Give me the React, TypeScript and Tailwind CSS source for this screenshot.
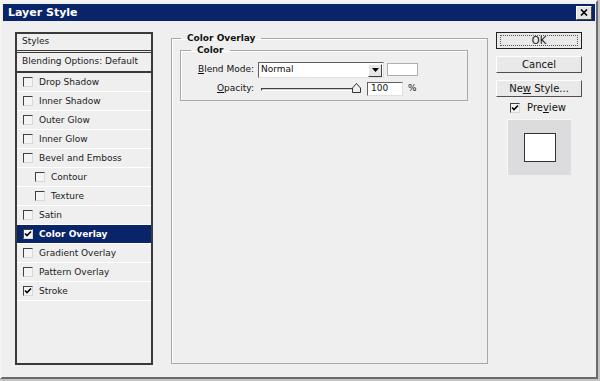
import { ReactNode } from "react";

const font = { fontFamily: '"DejaVu Sans", Verdana, sans-serif' };

const Check = ({ checked = false }: { checked?: boolean }) => (
    <span className="w-[10px] h-[10px] shrink-0 bg-[#f4f4f4] border-t border-l border-[#404040] border-r border-b border-r-[#d8d8d8] border-b-[#d8d8d8] flex items-center justify-center">
        {checked && (
            <svg width="8" height="8" viewBox="0 0 8 8">
                <path d="M1 3.5 L3 5.5 L7 1.5" stroke="#000" strokeWidth="1.6" fill="none" />
            </svg>
        )}
    </span>
);

interface RowProps {
    label: string;
    checked?: boolean;
    indent?: boolean;
    selected?: boolean;
}

const Row = ({ label, checked, indent, selected }: RowProps) => (
    <div
        className={`h-[19px] flex items-center gap-[6px] border-b border-white ${indent ? "pl-[18px]" : "pl-[6px]"} ${selected ? "bg-[#0a246a] text-white font-bold" : "text-[#1a1a1a]"}`}
    >
        <Check checked={checked} />
        <span className="text-[9px] leading-none">{label}</span>
    </div>
);

const Button = ({ children, focused = false }: { children: ReactNode; focused?: boolean }) => (
    <div
        className={`w-[86px] h-[17px] flex items-center justify-center bg-[#e9e9e9] text-[10px] text-[#111] border ${focused ? "border-[#202020]" : "border-t-white border-l-white border-r-[#505050] border-b-[#505050]"}`}
    >
        {focused ? (
            <span className="w-[78px] h-[11px] border border-dotted border-[#555] flex items-center justify-center leading-none">{children}</span>
        ) : (
            <span className="leading-none">{children}</span>
        )}
    </div>
);

const rows: RowProps[] = [
    { label: "Drop Shadow" },
    { label: "Inner Shadow" },
    { label: "Outer Glow" },
    { label: "Inner Glow" },
    { label: "Bevel and Emboss" },
    { label: "Contour", indent: true },
    { label: "Texture", indent: true },
    { label: "Satin" },
    { label: "Color Overlay", checked: true, selected: true },
    { label: "Gradient Overlay" },
    { label: "Pattern Overlay" },
    { label: "Stroke", checked: true },
];

export default function App() {
    return (
        <div className="w-[600px] h-[381px] bg-[#c4c4c4] overflow-hidden" style={font}>
            <div className="w-[598px] h-[379px] bg-[#efefef] border-t-2 border-l-2 border-t-[#f4f4f4] border-l-[#f4f4f4] border-r-2 border-b-2 border-r-[#6a6a6a] border-b-[#6a6a6a] flex flex-col">
                <div className="mx-[1px] mt-[2px] h-[17px] bg-[#0a246a] flex items-center justify-between pl-[5px] pr-[3px]">
                    <span className="text-white font-bold text-[11px] leading-none">Layer Style</span>
                    <div className="w-[16px] h-[14px] bg-[#e4e4e4] border border-t-white border-l-white border-r-[#404040] border-b-[#404040] flex items-center justify-center">
                        <svg width="8" height="7" viewBox="0 0 8 7">
                            <path d="M1 0.5 L7 6.5 M7 0.5 L1 6.5" stroke="#000" strokeWidth="1.6" />
                        </svg>
                    </div>
                </div>

                <div className="flex pl-[13px] pt-[11px]">
                    <div className="w-[138px] h-[333px] border-2 border-[#3a3a3a] bg-[#efefef] flex flex-col">
                        <div className="h-[19px] flex items-center pl-[5px] border-b-[3px] border-double border-[#3a3a3a] text-[9px] text-[#1a1a1a]">Styles</div>
                        <div className="h-[20px] flex items-center pl-[5px] border-b-2 border-[#3a3a3a] text-[9px] text-[#1a1a1a]">Blending Options: Default</div>
                        {rows.map((r) => (
                            <Row key={r.label} {...r} />
                        ))}
                    </div>

                    <fieldset className="ml-[18px] mt-[2px] w-[317px] h-[330px] border border-[#a8a8a8] shadow-[inset_1px_1px_0_#fff] px-[8px]">
                        <legend className="ml-[1px] px-[6px] text-[9px] font-bold text-[#111] leading-none">Color Overlay</legend>
                        <fieldset className="mt-[3px] w-[288px] h-[55px] border border-[#a8a8a8] shadow-[inset_1px_1px_0_#fff]">
                            <legend className="ml-[10px] px-[6px] text-[9px] font-bold text-[#111] leading-none">Color</legend>
                            <div className="flex items-center mt-[7px] pl-[14px]">
                                <span className="w-[63px] text-right text-[9px] text-[#111] pr-[4px]"><u>B</u>lend Mode:</span>
                                <div className="w-[126px] h-[16px] bg-white border border-t-[#606060] border-l-[#606060] border-r-[#e0e0e0] border-b-[#e0e0e0] flex items-center justify-between">
                                    <span className="pl-[2px] text-[9px] text-[#111]">Normal</span>
                                    <div className="w-[14px] h-[13px] mr-[1px] bg-[#e6e6e6] border border-t-white border-l-white border-r-[#404040] border-b-[#404040] flex items-center justify-center">
                                        <svg width="7" height="4" viewBox="0 0 7 4">
                                            <path d="M0 0 H7 L3.5 4 Z" fill="#000" />
                                        </svg>
                                    </div>
                                </div>
                                <div className="ml-[3px] mb-[2px] w-[31px] h-[13px] bg-white border border-[#b0b0b0]" />
                            </div>
                            <div className="flex items-center mt-[4px] pl-[14px]">
                                <span className="w-[63px] text-right text-[9px] text-[#111] pr-[4px]"><u>O</u>pacity:</span>
                                <div className="w-[100px] h-[8px] relative flex items-center ml-[3px]">
                                    <div className="w-full h-[3px] border-t border-l border-[#404040] border-b border-b-white bg-[#d0d0d0]" />
                                    <svg className="absolute right-[0px] top-[-2px]" width="9" height="10" viewBox="0 0 9 10">
                                        <path d="M0.5 9.5 V5 L4.5 0.5 L8.5 5 V9.5 Z" fill="#efefef" stroke="#333" />
                                    </svg>
                                </div>
                                <div className="ml-[6px] w-[36px] h-[14px] bg-white border border-t-[#606060] border-l-[#606060] border-r-[#e0e0e0] border-b-[#e0e0e0] flex items-center pl-[3px] text-[9px] text-[#111]">100</div>
                                <span className="ml-[5px] text-[9px] text-[#111]">%</span>
                            </div>
                        </fieldset>
                    </fieldset>

                    <div className="ml-[8px] flex flex-col items-center">
                        <div className="flex flex-col gap-[7px]">
                            <Button focused>OK</Button>
                            <Button>Cancel</Button>
                            <Button>Ne<u>w</u> Style...</Button>
                        </div>
                        <div className="mt-[6px] flex items-center gap-[7px] pr-[2px]">
                            <Check checked />
                            <span className="text-[10px] text-[#111] leading-none">Pre<u>v</u>iew</span>
                        </div>
                        <div className="mt-[6px] w-[64px] h-[56px] bg-[#dcdbdd] border-l border-t border-[#f8f8f8] flex items-center justify-center">
                            <div className="w-[32px] h-[29px] bg-white border border-[#333]" />
                        </div>
                    </div>
                </div>
            </div>
        </div>
    );
}
